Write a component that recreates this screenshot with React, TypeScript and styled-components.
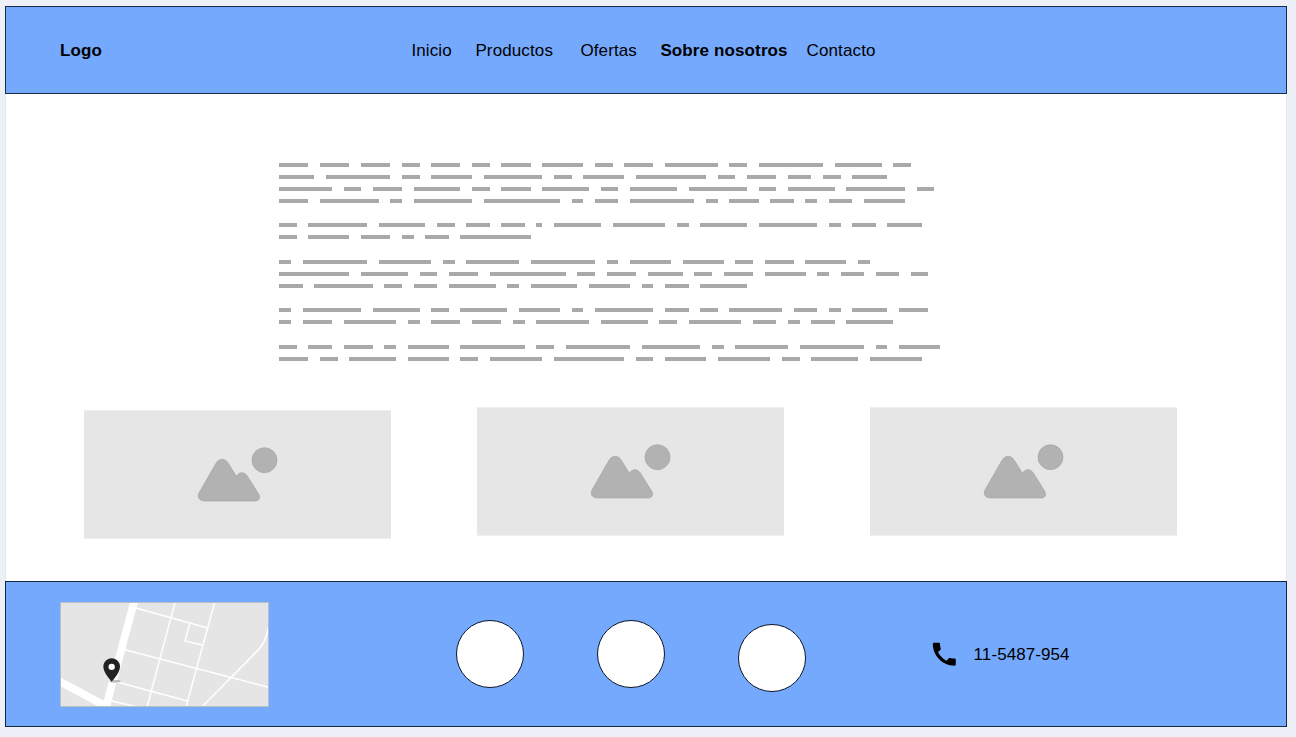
import React from 'react';
import styled, { createGlobalStyle } from 'styled-components';
import { MdCall } from 'react-icons/md';

const GlobalStyle = createGlobalStyle`
  *, *::before, *::after { box-sizing: border-box; }
  body {
    margin: 0;
    background: #edf1f7;
    color: #000;
    font-family: 'Liberation Sans', Arial, sans-serif;
    font-size: 17px;
    line-height: 20px;
  }
`;

const Page = styled.div`
  display: flex;
  flex-direction: column;
  width: 1282px;
  height: 721px;
  margin: 6px 0 0 5px;
  background: #fff;
`;

const Header = styled.header`
  display: flex;
  align-items: center;
  height: 88px;
  padding: 2px 0 0 54px;
  background: #75a9fd;
  border: 1px solid #1c2b44;
`;

const Logo = styled.div`
  width: 351.4px;
  font-weight: bold;
  letter-spacing: 0.1px;
`;

const Nav = styled.nav`
  display: flex;
`;

const NavItem = styled.a<{ $width: number; $active?: boolean }>`
  width: ${({ $width }) => $width}px;
  font-weight: ${({ $active }) => ($active ? 'bold' : 'normal')};
  letter-spacing: 0.12px;
  white-space: nowrap;
`;

const Main = styled.main`
  flex: 1;
  border: solid #e3e6ea;
  border-width: 0 1px;
  padding-top: 69px;
`;

const Article = styled.div`
  display: flex;
  flex-direction: column;
  height: 244px;
  margin-left: 273.2px;
`;

const Paragraph = styled.div<{ $after: number }>`
  display: flex;
  flex-direction: column;
  gap: 8px;
  margin-bottom: ${({ $after }) => $after}px;
`;

const Line = styled.div`
  display: flex;
  gap: 11.7px;
  height: 4px;
`;

const Word = styled.span<{ $chars: number }>`
  width: ${({ $chars }) => $chars * 5.85}px;
  background: #a9a9a9;
`;

const Gallery = styled.div`
  display: flex;
  gap: 86px;
  padding-left: 78px;
`;

const Picture = styled.div<{ $drop?: number }>`
  width: 307.4px;
  height: 129px;
  margin-top: ${({ $drop = 0 }) => $drop}px;
  margin-right: -0.4px;
  background: #e6e6e6;
  border: solid #efefef;
  border-width: 1px 0;
  svg { display: block; margin: 34px 0 0 113px; }
`;

const Footer = styled.footer`
  display: flex;
  align-items: flex-start;
  height: 146px;
  padding: 20px 0 0 54px;
  background: #75a9fd;
  border: 1px solid #14263f;
`;

const MapBox = styled.div`
  width: 210px;
  height: 105px;
  svg { display: block; }
`;

const Socials = styled.div`
  display: flex;
  gap: 73px;
  padding: 18px 0 0 186px;
`;

const Social = styled.span<{ $drop?: number }>`
  width: 68px;
  height: 68px;
  margin-top: ${({ $drop = 0 }) => $drop}px;
  border: 1px solid #0b1626;
  border-radius: 50%;
  background: #fff;
`;

const Phone = styled.div`
  display: flex;
  align-items: center;
  gap: 14px;
  padding: 37px 0 0 123px;
  svg { display: block; }
`;

const PhoneNumber = styled.span`
  padding-top: 2px;
  letter-spacing: 0.08px;
`;

const paragraphs: { after: number; lines: number[][] }[] = [
  {
    after: 20,
    lines: [
      [5, 5, 5, 3, 5, 3, 5, 7, 3, 5, 9, 3, 11, 8, 3],
      [6, 11, 3, 7, 10, 3, 7, 12, 3, 5, 4, 3, 6],
      [9, 3, 5, 8, 3, 5, 8, 3, 8, 10, 3, 8, 10, 3],
      [5, 10, 2, 10, 13, 2, 4, 11, 2, 5, 4, 2, 4, 7],
    ],
  },
  {
    after: 21,
    lines: [
      [3, 10, 8, 3, 4, 4, 1, 8, 9, 2, 8, 10, 2, 4, 6],
      [3, 7, 5, 2, 4, 12],
    ],
  },
  {
    after: 20,
    lines: [
      [2, 11, 9, 2, 9, 11, 2, 7, 7, 3, 5, 7, 2],
      [12, 8, 3, 5, 13, 3, 5, 6, 3, 5, 7, 2, 4, 4, 3],
      [4, 10, 3, 4, 8, 2, 8, 7, 2, 4, 8],
    ],
  },
  {
    after: 21,
    lines: [
      [2, 10, 8, 3, 8, 7, 2, 10, 4, 3, 9, 4, 2, 6, 5],
      [2, 5, 9, 2, 5, 5, 2, 9, 8, 3, 9, 4, 2, 4, 8],
    ],
  },
  {
    after: 0,
    lines: [
      [3, 4, 5, 2, 7, 11, 3, 11, 10, 2, 9, 11, 2, 7],
      [5, 3, 8, 7, 3, 9, 12, 3, 7, 9, 3, 8, 9],
    ],
  },
];

const MountainIcon = () => (
  <svg width="82" height="58" viewBox="0 0 82 58" fill="#b2b2b2" stroke="#a6a6a6" strokeWidth="0.7">
    <path d="M2.4 47.2 L19 18.3 C22 13 28.3 13 31.4 18.3 L39.4 31.3 C42 26.7 47.2 26.4 50.2 30.8 L61.6 49 C64 53 62 56 58.2 56 H8 C2 56 -0.4 52 2.4 47.2 Z" />
    <circle cx="67.5" cy="15.2" r="12.5" />
  </svg>
);

const StreetMap = () => (
  <svg width="210" height="105" viewBox="30 36 630 315">
    <rect x="30" y="36" width="627" height="315" fill="#e5e5e5" />
    <g fill="none" stroke="#fff" strokeWidth="4.5">
      <path d="M258 54 L470 113" />
      <path d="M225 179 L656 292" />
      <path d="M190 273 L412 333" />
      <path d="M182 332 L262 351" />
      <path d="M375 37 L291 351" />
      <path d="M494 37 L408 351" />
      <path d="M419 101 L405 153 L457 165" />
      <path d="M455 351 L625 180 Q648 154 655 114" />
      <path d="M252 36 L168 351" strokeWidth="23" />
      <path d="M26 273 L178 354" strokeWidth="23" />
    </g>
    <rect x="31.5" y="37.5" width="624" height="312" fill="none" stroke="#b9c0c4" strokeWidth="3" />
    <ellipse cx="195" cy="274" rx="17" ry="4" fill="#888" opacity="0.55" />
    <path
      fill="#222"
      d="M185 205 C171 205 160 216 160 230 C160 248 185 275 185 275 C185 275 210 248 210 230 C210 216 199 205 185 205 Z"
    />
    <circle cx="185" cy="230.5" r="9.5" fill="#fff" />
  </svg>
);

export default function App() {
  return (
    <>
      <GlobalStyle />
      <Page>
        <Header>
          <Logo>Logo</Logo>
          <Nav>
            <NavItem $width={64}>Inicio</NavItem>
            <NavItem $width={105}>Productos</NavItem>
            <NavItem $width={80}>Ofertas</NavItem>
            <NavItem $width={146.2} $active>Sobre nosotros</NavItem>
            <NavItem $width={70}>Contacto</NavItem>
          </Nav>
        </Header>
        <Main>
          <Article>
            {paragraphs.map((p, i) => (
              <Paragraph key={i} $after={p.after}>
                {p.lines.map((line, j) => (
                  <Line key={j}>
                    {line.map((chars, k) => (
                      <Word key={k} $chars={chars} />
                    ))}
                  </Line>
                ))}
              </Paragraph>
            ))}
          </Article>
          <Gallery>
            <Picture $drop={3}><MountainIcon /></Picture>
            <Picture><MountainIcon /></Picture>
            <Picture><MountainIcon /></Picture>
          </Gallery>
        </Main>
        <Footer>
          <MapBox><StreetMap /></MapBox>
          <Socials>
            <Social />
            <Social />
            <Social $drop={4} />
          </Socials>
          <Phone>
            <MdCall size={30.6} />
            <PhoneNumber>11-5487-954</PhoneNumber>
          </Phone>
        </Footer>
      </Page>
    </>
  );
}
